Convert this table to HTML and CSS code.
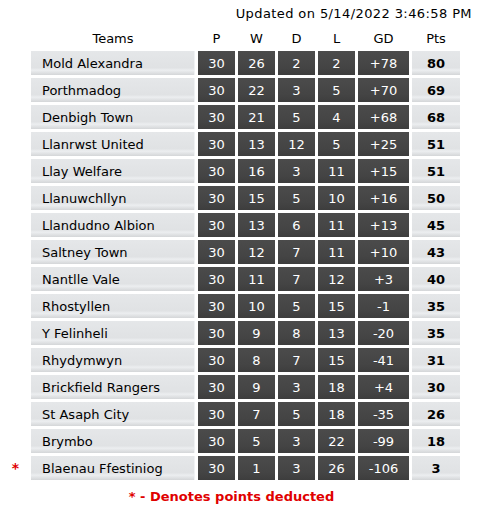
FILE: index.html
```html
<!DOCTYPE html>
<html>
<head>
<meta charset="utf-8">
<link rel="stylesheet" href="styles.css">
</head>
<body>
<div class="wrap">
  <div class="updated">Updated on 5/14/2022 3:46:58 PM</div>
  <table class="league">
    <thead>
      <tr><th class="mark"></th><th class="team-h">Teams</th><th>P</th><th>W</th><th>D</th><th>L</th><th class="gd">GD</th><th class="pts">Pts</th></tr>
    </thead>
    <tbody>
      <tr><td class="mark"></td><td class="team">Mold Alexandra</td><td class="n">30</td><td class="n">26</td><td class="n">2</td><td class="n">2</td><td class="n">+78</td><td class="p">80</td></tr>
      <tr><td class="mark"></td><td class="team">Porthmadog</td><td class="n">30</td><td class="n">22</td><td class="n">3</td><td class="n">5</td><td class="n">+70</td><td class="p">69</td></tr>
      <tr><td class="mark"></td><td class="team">Denbigh Town</td><td class="n">30</td><td class="n">21</td><td class="n">5</td><td class="n">4</td><td class="n">+68</td><td class="p">68</td></tr>
      <tr><td class="mark"></td><td class="team">Llanrwst United</td><td class="n">30</td><td class="n">13</td><td class="n">12</td><td class="n">5</td><td class="n">+25</td><td class="p">51</td></tr>
      <tr><td class="mark"></td><td class="team">Llay Welfare</td><td class="n">30</td><td class="n">16</td><td class="n">3</td><td class="n">11</td><td class="n">+15</td><td class="p">51</td></tr>
      <tr><td class="mark"></td><td class="team">Llanuwchllyn</td><td class="n">30</td><td class="n">15</td><td class="n">5</td><td class="n">10</td><td class="n">+16</td><td class="p">50</td></tr>
      <tr><td class="mark"></td><td class="team">Llandudno Albion</td><td class="n">30</td><td class="n">13</td><td class="n">6</td><td class="n">11</td><td class="n">+13</td><td class="p">45</td></tr>
      <tr><td class="mark"></td><td class="team">Saltney Town</td><td class="n">30</td><td class="n">12</td><td class="n">7</td><td class="n">11</td><td class="n">+10</td><td class="p">43</td></tr>
      <tr><td class="mark"></td><td class="team">Nantlle Vale</td><td class="n">30</td><td class="n">11</td><td class="n">7</td><td class="n">12</td><td class="n">+3</td><td class="p">40</td></tr>
      <tr><td class="mark"></td><td class="team">Rhostyllen</td><td class="n">30</td><td class="n">10</td><td class="n">5</td><td class="n">15</td><td class="n">-1</td><td class="p">35</td></tr>
      <tr><td class="mark"></td><td class="team">Y Felinheli</td><td class="n">30</td><td class="n">9</td><td class="n">8</td><td class="n">13</td><td class="n">-20</td><td class="p">35</td></tr>
      <tr><td class="mark"></td><td class="team">Rhydymwyn</td><td class="n">30</td><td class="n">8</td><td class="n">7</td><td class="n">15</td><td class="n">-41</td><td class="p">31</td></tr>
      <tr><td class="mark"></td><td class="team">Brickfield Rangers</td><td class="n">30</td><td class="n">9</td><td class="n">3</td><td class="n">18</td><td class="n">+4</td><td class="p">30</td></tr>
      <tr><td class="mark"></td><td class="team">St Asaph City</td><td class="n">30</td><td class="n">7</td><td class="n">5</td><td class="n">18</td><td class="n">-35</td><td class="p">26</td></tr>
      <tr><td class="mark"></td><td class="team">Brymbo</td><td class="n">30</td><td class="n">5</td><td class="n">3</td><td class="n">22</td><td class="n">-99</td><td class="p">18</td></tr>
      <tr><td class="mark star">*</td><td class="team">Blaenau Ffestiniog</td><td class="n">30</td><td class="n">1</td><td class="n">3</td><td class="n">26</td><td class="n">-106</td><td class="p">3</td></tr>
    </tbody>
  </table>
  <div class="note">* - Denotes points deducted</div>
</div>
</body>
</html>
```

FILE: styles.css
```css
html, body {
  margin: 0;
  padding: 0;
  background: #ffffff;
}
body {
  font-family: "DejaVu Sans", Verdana, sans-serif;
  font-size: 13px;
  color: #000;
}
.wrap {
  width: 478px;
}
.updated {
  height: 25px;
  line-height: 28px;
  text-align: right;
  padding-right: 6px;
  letter-spacing: 0.4px;
  color: #000;
}
.league {
  border-collapse: separate;
  border-spacing: 3px;
  width: 463px;
  table-layout: fixed;
}
.league th {
  font-weight: normal;
  height: 20px;
  padding: 0;
  text-align: center;
  vertical-align: middle;
  width: 37px;
}
.league th.mark { width: 25px; }
.league th.team-h { width: 164px; }
.league th.gd { width: 51px; }
.league th.pts { width: 48px; }
.league td {
  height: 24px;
  padding: 0;
  text-align: center;
  vertical-align: middle;
}
.league td.mark {
  color: #e00000;
  font-weight: bold;
  font-size: 14px;
}
.league td.team {
  text-align: left;
  padding-left: 11px;
  background: linear-gradient(to bottom, #e5e7e9 0%, #e0e2e4 70%, #eceef0 80%, #d4d6d8 100%);
  box-shadow: inset -1px 0 0 #f0f2f4;
}
.league td.n {
  color: #fff;
  background: linear-gradient(to bottom, #4b4b4b 0%, #444444 70%, #3d3d3d 100%);
}
.league td.p {
  font-weight: bold;
  background: linear-gradient(to bottom, #e5e7e9 0%, #e0e2e4 70%, #eceef0 80%, #d4d6d8 100%);
}
.note {
  width: 463px;
  text-align: center;
  color: #e00000;
  font-weight: bold;
  line-height: 28px;
}
```
